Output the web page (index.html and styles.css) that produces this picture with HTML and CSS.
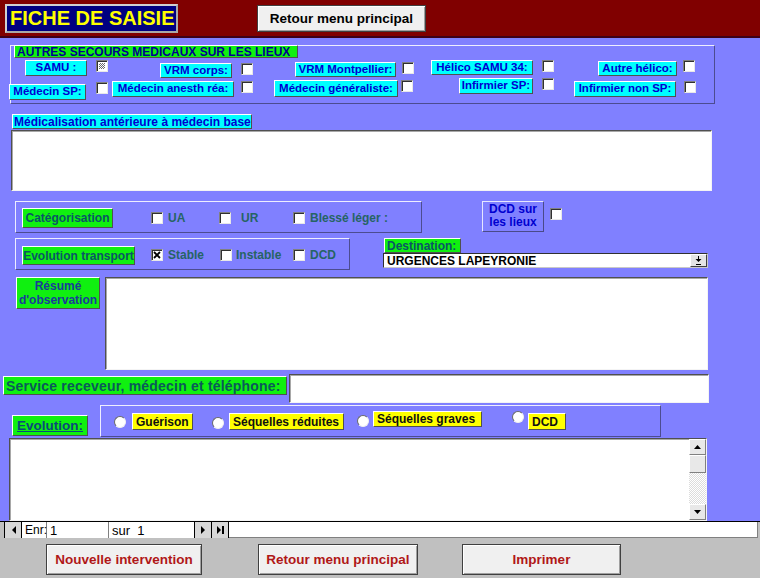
FILE: index.html
```html
<!DOCTYPE html>
<html lang="fr">
<head>
<meta charset="utf-8">
<title>Fiche de saisie</title>
<link rel="stylesheet" href="styles.css">
</head>
<body>
<div class="app">
  <header class="topbar">
    <div class="title">FICHE DE SAISIE</div>
    <button class="btn btn-top">Retour menu principal</button>
  </header>

  <main class="form">
    <section class="grp secours">
      <div class="lbl green hdr">AUTRES SECOURS MEDICAUX SUR LES LIEUX</div>
      <div class="srow r1">
        <div class="pair p-samu"><span class="lbl cyan">SAMU :</span><span class="cb grayed"></span></div>
        <div class="pair p-vrmc"><span class="lbl cyan">VRM corps:</span><span class="cb"></span></div>
        <div class="pair p-vrmm"><span class="lbl cyan">VRM Montpellier:</span><span class="cb"></span></div>
        <div class="pair p-heli"><span class="lbl cyan">Hélico SAMU 34:</span><span class="cb"></span></div>
        <div class="pair p-autre"><span class="lbl cyan">Autre hélico:</span><span class="cb"></span></div>
      </div>
      <div class="srow r2">
        <div class="pair p-msp"><span class="lbl cyan">Médecin SP:</span><span class="cb"></span></div>
        <div class="pair p-mar"><span class="lbl cyan">Médecin anesth réa:</span><span class="cb"></span></div>
        <div class="pair p-mg"><span class="lbl cyan">Médecin généraliste:</span><span class="cb"></span></div>
        <div class="pair p-isp"><span class="lbl cyan">Infirmier SP:</span><span class="cb"></span></div>
        <div class="pair p-insp"><span class="lbl cyan">Infirmier non SP:</span><span class="cb"></span></div>
      </div>
    </section>

    <div class="lbl cyan medic-lbl">Médicalisation antérieure à médecin base</div>
    <div class="textbox medic-box"></div>

    <div class="rowA">
      <div class="grp categ">
        <div class="lbl green glbl categ-lbl">Catégorisation</div>
        <div class="opt o-ua"><span class="cb"></span>UA</div>
        <div class="opt o-ur"><span class="cb"></span>UR</div>
        <div class="opt o-bl"><span class="cb"></span>Blessé léger :</div>
      </div>
      <div class="dcdbox"><span>DCD sur</span><span>les lieux</span></div>
      <span class="cb dcd-cb"></span>
    </div>

    <div class="rowB">
      <div class="grp evtr">
        <div class="lbl green glbl evtr-lbl">Evolution transport</div>
        <div class="opt o-st"><span class="cb checked"><svg width="8" height="8" viewBox="0 0 8 8"><path d="M1 1L7 7M7 1L1 7" stroke="#000" stroke-width="1.8"/></svg></span>Stable</div>
        <div class="opt o-in"><span class="cb"></span>Instable</div>
        <div class="opt o-dcd"><span class="cb"></span>DCD</div>
      </div>
      <div class="dest">
        <div class="lbl green dest-lbl">Destination:</div>
        <div class="combo">
          <span>URGENCES LAPEYRONIE</span>
          <span class="combo-btn"><svg width="7" height="9" viewBox="0 0 7 9"><rect x="3" y="0" width="1" height="3" fill="#000"/><polygon points="0.5,3 6.5,3 3.5,6" fill="#000"/><rect x="1" y="8" width="5" height="1" fill="#000"/></svg></span>
        </div>
      </div>
    </div>

    <div class="resume-row">
      <div class="lbl green resume-lbl"><span>Résumé</span><span>d'observation</span></div>
      <div class="textbox resume-box"></div>
    </div>

    <div class="service-row">
      <div class="lbl green service-lbl">Service receveur, médecin et téléphone:</div>
      <div class="textbox service-box"></div>
    </div>

    <div class="evo-row">
      <div class="lbl green evo-lbl">Evolution:</div>
      <div class="grp evo-grp">
        <span class="rd rd1"></span><span class="lbl yellow y1">Guérison</span>
        <span class="rd rd2"></span><span class="lbl yellow y2">Séquelles réduites</span>
        <span class="rd rd3"></span><span class="lbl yellow y3">Séquelles graves</span>
        <span class="rd rd4"></span><span class="lbl yellow y4">DCD</span>
      </div>
    </div>

    <div class="textbox notes">
      <div class="vscroll">
        <span class="sb-btn"><svg width="7" height="4" viewBox="0 0 7 4"><polygon points="0,4 7,4 3.5,0" fill="#000"/></svg></span>
        <span class="sb-thumb"></span>
        <span class="sb-track"></span>
        <span class="sb-btn"><svg width="7" height="4" viewBox="0 0 7 4"><polygon points="0,0 7,0 3.5,4" fill="#000"/></svg></span>
      </div>
    </div>
  </main>

  <nav class="navbar">
    <span class="nb-edge"></span>
    <span class="nb-btn"><svg width="5" height="8" viewBox="0 0 5 8"><polygon points="5,0 5,8 1,4" fill="#000"/></svg></span>
    <span class="nb-cell nb-enr">Enr:</span>
    <span class="nb-cell nb-num">1</span>
    <span class="nb-cell nb-sur">sur&nbsp; 1</span>
    <span class="nb-btn"><svg width="5" height="8" viewBox="0 0 5 8"><polygon points="0,0 0,8 4,4" fill="#000"/></svg></span>
    <span class="nb-btn"><svg width="7" height="8" viewBox="0 0 7 8"><polygon points="0,0 0,8 4,4" fill="#000"/><rect x="5" y="0" width="2" height="8" fill="#000"/></svg></span>
    <span class="nb-rest"></span>
    <span class="nb-end"></span>
  </nav>

  <footer class="footer">
    <button class="btn btn-foot bf1">Nouvelle intervention</button>
    <button class="btn btn-foot bf2">Retour menu principal</button>
    <button class="btn btn-foot bf3">Imprimer</button>
  </footer>
</div>
</body>
</html>
```

FILE: styles.css
```css
* { box-sizing: border-box; }
html, body { margin: 0; padding: 0; }
body {
  width: 760px;
  height: 578px;
  overflow: hidden;
  background: #c0c0c0;
  font-family: "Liberation Sans", Arial, sans-serif;
}
.app { width: 760px; height: 578px; display: flex; flex-direction: column; }

/* ---------- header ---------- */
.topbar {
  flex: none;
  height: 38px;
  background: #800000;
  border-bottom: 2px solid #3e0018;
  display: flex;
  align-items: flex-start;
}
.title {
  margin: 4px 0 0 5px;
  width: 173px;
  height: 29px;
  background: #000080;
  border: 2px solid #d0d0d0;
  border-right-color: #a8a8a8;
  border-bottom-color: #a8a8a8;
  color: #ffff00;
  font-weight: bold;
  font-size: 20px;
  line-height: 25px;
  padding-left: 3px;
  white-space: nowrap;
}
.btn {
  font-family: inherit;
  font-weight: bold;
  background: #f0f0f0;
  border: 1px solid #404040;
  box-shadow: inset 1px 1px 0 #ffffff, inset -1px -1px 0 #a0a0a0;
  padding: 0;
  white-space: nowrap;
}
.btn-top {
  margin: 5px 0 0 79px;
  width: 169px;
  height: 27px;
  font-size: 13.5px;
  color: #000;
}

/* ---------- form area ---------- */
.form {
  flex: none;
  height: 483px;
  background: #8080ff;
  overflow: hidden;
}
.grp {
  border: 1px solid;
  border-color: #eeeeff #4c4c90 #4c4c90 #eeeeff;
}
.lbl {
  display: flex;
  align-items: center;
  justify-content: center;
  white-space: nowrap;
  font-weight: bold;
  font-size: 11.5px;
  line-height: 1;
  border: 1px solid;
  border-color: #ffffff #505050 #505050 #ffffff;
}
.cyan { background: #00ffff; color: #0000d0; }
.green { background: #10f010; color: #0a5666; }
.yellow { background: #ffff00; color: #101010; justify-content: flex-start; padding-left: 3px; font-size: 12px; }

.cb {
  flex: none;
  display: block;
  width: 12px;
  height: 12px;
  background: #fff;
  border: 1px solid;
  border-color: #808080 #e8e8e8 #e8e8e8 #808080;
  box-shadow: inset 1px 1px 0 #303030;
}
.cb.grayed {
  padding: 2px;
  background: repeating-conic-gradient(#6a6a6a 0 25%, #ffffff 0 50%) 0 0 / 2px 2px content-box, #fff;
}
.cb.checked svg { display: block; margin: 1px 0 0 1px; }

/* secours group */
.secours { margin: 7px 0 0 10px; width: 705px; height: 59px; }
.hdr {
  margin: -1px 0 0 3px;
  width: 284px;
  height: 13px;
  justify-content: flex-start;
  padding-left: 2px;
  font-size: 12px;
  color: #000090;
}
.srow { display: flex; align-items: flex-start; }
.r1 { margin-top: 2px; height: 18px; }
.r2 { height: 22px; }
.pair {
  display: flex;
  align-items: flex-start;
  margin-left: var(--ml);
  margin-top: var(--mt);
}
.pair .lbl { width: var(--w); height: var(--h); }
.pair .cb { margin-left: var(--g); margin-top: var(--ct, 0px); }

.p-samu  { --ml: 14px; --mt: 0px; --w: 62px;  --h: 16px; --g: 9px; }
.p-vrmc  { --ml: 52px; --mt: 3px; --w: 72px;  --h: 15px; --g: 9px; }
.p-vrmm  { --ml: 42px; --mt: 2px; --w: 101px; --h: 15px; --g: 6px; }
.p-heli  { --ml: 17px; --mt: 0px; --w: 102px; --h: 15px; --g: 9px; }
.p-autre { --ml: 44px; --mt: 1px; --w: 79px;  --h: 15px; --g: 6px; --ct: -1px; }

.p-msp   { --ml: -2px; --mt: 6px; --w: 77px;  --h: 16px; --g: 10px; --ct: -2px; }
.p-mar   { --ml: 4px;  --mt: 3px; --w: 122px; --h: 16px; --g: 7px; }
.p-mg    { --ml: 21px; --mt: 2px; --w: 124px; --h: 17px; --g: 3px; }
.p-isp   { --ml: 46px; --mt: 0px; --w: 74px;  --h: 16px; --g: 9px; }
.p-insp  { --ml: 20px; --mt: 3px; --w: 102px; --h: 16px; --g: 8px; }

/* médicalisation */
.medic-lbl {
  margin: 10px 0 0 12px;
  width: 240px;
  height: 15px;
  justify-content: flex-start;
  padding-left: 1px;
  font-size: 12px;
}
.textbox {
  background: #fff;
  border: 1px solid;
  border-color: #505050 #f4f4f4 #f4f4f4 #505050;
  box-shadow: inset 1px 1px 0 #a8a8a8;
}
.medic-box { margin: 1px 0 0 11px; width: 701px; height: 61px; }

/* catégorisation / évolution transport */
.rowA { display: flex; align-items: flex-start; margin-top: 10px; height: 32px; }
.rowB { display: flex; align-items: flex-start; margin-top: 5px; height: 32px; }
.categ, .evtr { display: flex; align-items: flex-start; margin-left: 15px; height: 32px; }
.categ { width: 407px; }
.evtr { width: 335px; }
.glbl { font-size: 12px; }
.categ-lbl { margin: 6px 0 0 6px; width: 91px; height: 20px; }
.evtr-lbl { margin: 7px 0 0 6px; width: 113px; height: 19px; }

.opt {
  flex: none;
  display: flex;
  align-items: center;
  margin-top: 9px;
  font-weight: bold;
  font-size: 12px;
  color: #266464;
  white-space: nowrap;
}
.opt .cb { margin-right: 5px; }
.o-ua { margin-left: 38px; width: 68px; }
.o-ur { width: 74px; }
.o-ur .cb { margin-right: 10px; }
.o-st { margin-left: 16px; width: 69px; }
.o-in { width: 73px; }
.o-in .cb { margin-right: 4px; }

.dcdbox {
  margin-left: 60px;
  width: 62px;
  height: 31px;
  border: 1px solid;
  border-color: #e6e6ff #4a4a88 #4a4a88 #e6e6ff;
  color: #0000d0;
  font-weight: bold;
  font-size: 12px;
  line-height: 13px;
  display: flex;
  flex-direction: column;
  align-items: center;
  padding-top: 1px;
  white-space: nowrap;
}
.dcd-cb { margin: 7px 0 0 6px; }

.dest { margin-left: 33px; display: flex; flex-direction: column; }
.dest-lbl {
  margin-left: 1px;
  width: 77px;
  height: 15px;
  justify-content: flex-start;
  padding-left: 2px;
  font-size: 12px;
}
.combo {
  width: 325px;
  height: 15px;
  background: #fff;
  border: 1px solid;
  border-color: #303030 #c8c8c8 #c8c8c8 #303030;
  display: flex;
  align-items: center;
  justify-content: space-between;
  padding-left: 3px;
  font-weight: bold;
  font-size: 12px;
  color: #000;
}
.combo-btn {
  width: 17px;
  height: 13px;
  background: #e4e4e4;
  border: 1px solid;
  border-color: #ffffff #404040 #404040 #ffffff;
  display: flex;
  align-items: center;
  justify-content: center;
}

/* résumé */
.resume-row { display: flex; align-items: flex-start; margin-top: 7px; height: 93px; }
.resume-lbl {
  margin-left: 16px;
  width: 84px;
  height: 32px;
  flex-direction: column;
  justify-content: flex-start;
  padding-top: 1px;
  line-height: 14px;
  font-size: 12px;
  color: #1a3c9a;
}
.resume-box { margin-left: 5px; width: 603px; height: 93px; }

/* service receveur */
.service-row { display: flex; align-items: flex-start; margin-top: 4px; height: 29px; }
.service-lbl {
  margin: 2px 0 0 3px;
  width: 284px;
  height: 19px;
  justify-content: flex-start;
  padding-left: 2px;
  font-size: 14px;
  letter-spacing: 0.2px;
  color: #0a5a5a;
}
.service-box { margin-left: 2px; width: 420px; height: 29px; }

/* évolution */
.evo-row { display: flex; align-items: flex-start; margin-top: 2px; height: 32px; }
.evo-lbl {
  margin: 10px 0 0 12px;
  width: 76px;
  height: 21px;
  font-size: 13.5px;
  text-decoration: underline;
  color: #0a4a7a;
}
.evo-grp { display: flex; align-items: flex-start; margin-left: 12px; width: 561px; height: 32px; }
.rd {
  flex: none;
  display: block;
  width: 12px;
  height: 12px;
  border-radius: 50%;
  background: #fff;
  border: 1px solid;
  border-color: #6a6a6a #f0f0f0 #f0f0f0 #6a6a6a;
}
.rd1 { margin: 10px 0 0 13px; }
.rd2 { margin: 11px 0 0 19px; }
.rd3 { margin: 9px 0 0 13px; }
.rd4 { margin: 5px 0 0 30px; }
.y1 { margin: 7px 0 0 6px; width: 61px; height: 17px; }
.y2 { margin: 7px 0 0 5px; width: 115px; height: 17px; }
.y3 { margin: 5px 0 0 4px; width: 109px; height: 16px; }
.y4 { margin: 7px 0 0 4px; width: 38px; height: 17px; }

/* notes + scrollbar */
.notes {
  margin: 1px 0 0 9px;
  width: 698px;
  height: 83px;
  display: flex;
  justify-content: flex-end;
}
.vscroll { width: 17px; height: 81px; display: flex; flex-direction: column; }
.sb-btn, .sb-thumb {
  flex: none;
  display: flex;
  align-items: center;
  justify-content: center;
  background: #e8e8e8;
  border: 1px solid;
  border-color: #ffffff #808080 #808080 #ffffff;
}
.sb-btn { height: 16px; }
.sb-thumb { height: 18px; }
.sb-track {
  flex: 1;
  background: repeating-conic-gradient(#dcdcdc 0 25%, #ffffff 0 50%) 0 0 / 2px 2px;
}

/* record navigation */
.navbar {
  flex: none;
  height: 17px;
  display: flex;
  background: #fff;
  border-top: 1px solid #000;
  font-size: 12px;
  color: #000;
}
.nb-edge { width: 5px; background: #c0c0c0; border-right: 1px solid #000; }
.nb-btn {
  flex: none;
  width: 17px;
  display: flex;
  align-items: center;
  justify-content: center;
  background: #d8d8d8;
  border-right: 1px solid #000;
}
.nb-cell {
  flex: none;
  display: flex;
  align-items: center;
  padding-left: 3px;
  border-right: 1px solid #808080;
}
.nb-enr { width: 25px; }
.nb-num { width: 62px; font-size: 13px; }
.nb-sur { width: 86px; font-size: 13px; border-right-color: #000; }
.nb-rest { flex: 1; border-right: 1px solid #808080; border-bottom: 1px solid #808080; }
.nb-end { width: 2px; background: #c0c0c0; }

/* footer */
.footer {
  flex: 1;
  background: #c0c0c0;
  display: flex;
  align-items: flex-start;
  padding-top: 6px;
}
.btn-foot { height: 31px; font-size: 13.5px; color: #b01818; }
.bf1 { margin-left: 46px; width: 156px; }
.bf2 { margin-left: 56px; width: 160px; }
.bf3 { margin-left: 44px; width: 159px; }
```
